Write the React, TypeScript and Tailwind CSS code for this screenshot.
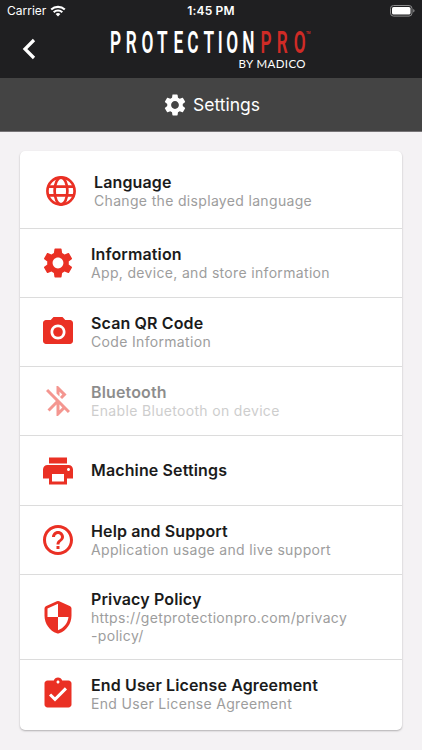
import type { ReactNode } from "react";
import {
  MdAssignmentTurnedIn,
  MdBluetoothDisabled,
  MdCameraAlt,
  MdHelpOutline,
  MdPrint,
  MdSettings,
} from "react-icons/md";

type SettingsRowProps = {
  icon: ReactNode;
  title: string;
  lines?: string[];
  className?: string;
};

const StatusBar = () => (
  <div className="grid h-[22px] grid-cols-3 items-center px-[7px] text-white">
    <div className="flex items-center gap-[4px]">
      <span className="text-[12px] leading-[22px]">Carrier</span>
      <svg className="h-[12px] w-[16px]" viewBox="0 0 16 12" fill="none" stroke="white" strokeWidth="2.1">
        <path d="M1.2 4.6a9.8 9.8 0 0 1 13.6 0" />
        <path d="M3.7 7.2a6.2 6.2 0 0 1 8.6 0" />
        <path d="M8 11.6 5.6 9.1a3.5 3.5 0 0 1 4.8 0Z" fill="white" stroke="none" />
      </svg>
    </div>
    <span className="text-center text-[12px] font-semibold leading-[22px] tracking-[0.2px]">1:45 PM</span>
    <svg className="h-[12px] w-[26px] justify-self-end" viewBox="0 0 26 12">
      <rect x="1.5" y="0.5" width="21.5" height="10.6" rx="3" fill="none" stroke="#8b8b8c" />
      <rect x="3" y="2" width="18.5" height="7.6" rx="1.6" fill="white" />
      <path d="M24.2 4v3.6q1.4-.6 1.4-1.8T24.2 4Z" fill="#8b8b8c" />
    </svg>
  </div>
);

const Logo = () => (
  <svg className="h-[48px] w-[206px]" viewBox="0 0 206 48" fontFamily="Roboto, sans-serif">
    <g transform="scale(0.54 1)" fontSize="32" fontWeight="600">
      <text y="31" fill="white" x="1.7 31 60 89 119.5 145 175 201.5 217 247">
        PROTECTION
      </text>
      <text y="31" fill="#d02b26" x="280.5 310.5 342">
        PRO
      </text>
    </g>
    <text x="197" y="12" fontSize="3" fill="#d02b26" fontWeight="600">TM</text>
    <text x="129.5" y="46" fontSize="11.5" fill="white" textLength="67" fontFamily="Lato, sans-serif">
      BY MADICO
    </text>
  </svg>
);

const GlobeIcon = () => (
  <svg className="size-9" viewBox="0 0 36 36" fill="none" stroke="currentColor" strokeWidth="2.7">
    <circle cx="18" cy="18" r="13.6" />
    <ellipse cx="18" cy="18" rx="6.4" ry="13.4" />
    <path d="M5.2 13.7h25.600M5.2 22.300h25.600" />
  </svg>
);

const ShieldIcon = () => (
  <svg className="size-9" viewBox="0 0 24 24" fill="currentColor">
    <path
      fillRule="evenodd"
      d="M11.2 1.5 4.2 4.6Q3 5.1 3 6.4V11c0 5.5 3.5 10.3 8.2 11.8q.8.3 1.6 0C17.5 21.3 21 16.5 21 11V6.4q0-1.3-1.2-1.8l-7-3.1q-.8-.3-1.6 0ZM12 12h7c-.5 4.1-3.3 7.6-7 8.8V12H5V6.3l7-3.1V12Z"
    />
  </svg>
);

const SettingsRow = ({ icon, title, lines = [], className = "pl-5" }: SettingsRowProps) => (
  <div className={`flex items-center border-b border-[#dcdcdc] last:border-b-0 ${className}`}>
    <div className="flex w-[51px] shrink-0 text-[#ea3024]">{icon}</div>
    <div className="flex flex-col items-start whitespace-nowrap">
      <h2 className="text-[16px] font-semibold leading-[19px] tracking-[0.13px] text-[#1b1b1b]">{title}</h2>
      {lines.map((line) => (
        <p key={line} className="text-[14px] leading-[18px] tracking-[0.33px] text-[#9d9d9d]">
          {line}
        </p>
      ))}
    </div>
  </div>
);

export default function App() {
  return (
    <div className="flex h-[750px] w-[422px] flex-col overflow-hidden bg-[#f4f2f4] font-['Inter',sans-serif]">
      <header className="h-[78px] bg-[#1f1f21]">
        <StatusBar />
        <div className="flex h-[56px] items-start">
          <svg className="ml-[22px] mt-[16px] h-[22px] w-[14px]" viewBox="0 0 14 22" fill="none" stroke="white" strokeWidth="3.2">
            <path d="M12 2 3 11l9 9" />
          </svg>
          <div className="ml-[73px]">
            <Logo />
          </div>
        </div>
      </header>

      <div className="flex h-[54px] items-center justify-center gap-[5px] border-b border-[#767476] bg-[#444444] text-white">
        <MdSettings className="size-[26px]" />
        <h1 className="pt-px text-[17.5px] leading-6">Settings</h1>
      </div>

      <main className="mx-5 mt-[19px] h-[579px] w-[382px] overflow-hidden rounded-[5px] bg-white shadow-[0_1px_2px_rgba(0,0,0,0.28)]">
        <SettingsRow
          className="h-[78px] pl-[23px] pt-[3px]"
          icon={<GlobeIcon />}
          title="Language"
          lines={["Change the displayed language"]}
        />
        <SettingsRow
          className="h-[69px] pl-5"
          icon={<MdSettings className="size-9" />}
          title="Information"
          lines={["App, device, and store information"]}
        />
        <SettingsRow
          className="h-[69px] pl-5"
          icon={<MdCameraAlt className="size-9" />}
          title="Scan QR Code"
          lines={["Code Information"]}
        />
        <SettingsRow
          className="h-[69px] pl-5 *:opacity-50"
          icon={<MdBluetoothDisabled className="size-9" />}
          title="Bluetooth"
          lines={["Enable Bluetooth on device"]}
        />
        <SettingsRow
          className="h-[70px] pl-5"
          icon={<MdPrint className="size-9" />}
          title="Machine Settings"
        />
        <SettingsRow
          className="h-[69px] pl-5"
          icon={<MdHelpOutline className="size-9" />}
          title="Help and Support"
          lines={["Application usage and live support"]}
        />
        <SettingsRow
          className="h-[85px] pl-5"
          icon={<ShieldIcon />}
          title="Privacy Policy"
          lines={["https://getprotectionpro.com/privacy", "-policy/"]}
        />
        <SettingsRow
          className="h-[68px] pl-5"
          icon={<MdAssignmentTurnedIn className="size-9" />}
          title="End User License Agreement"
          lines={["End User License Agreement"]}
        />
      </main>
    </div>
  );
}
